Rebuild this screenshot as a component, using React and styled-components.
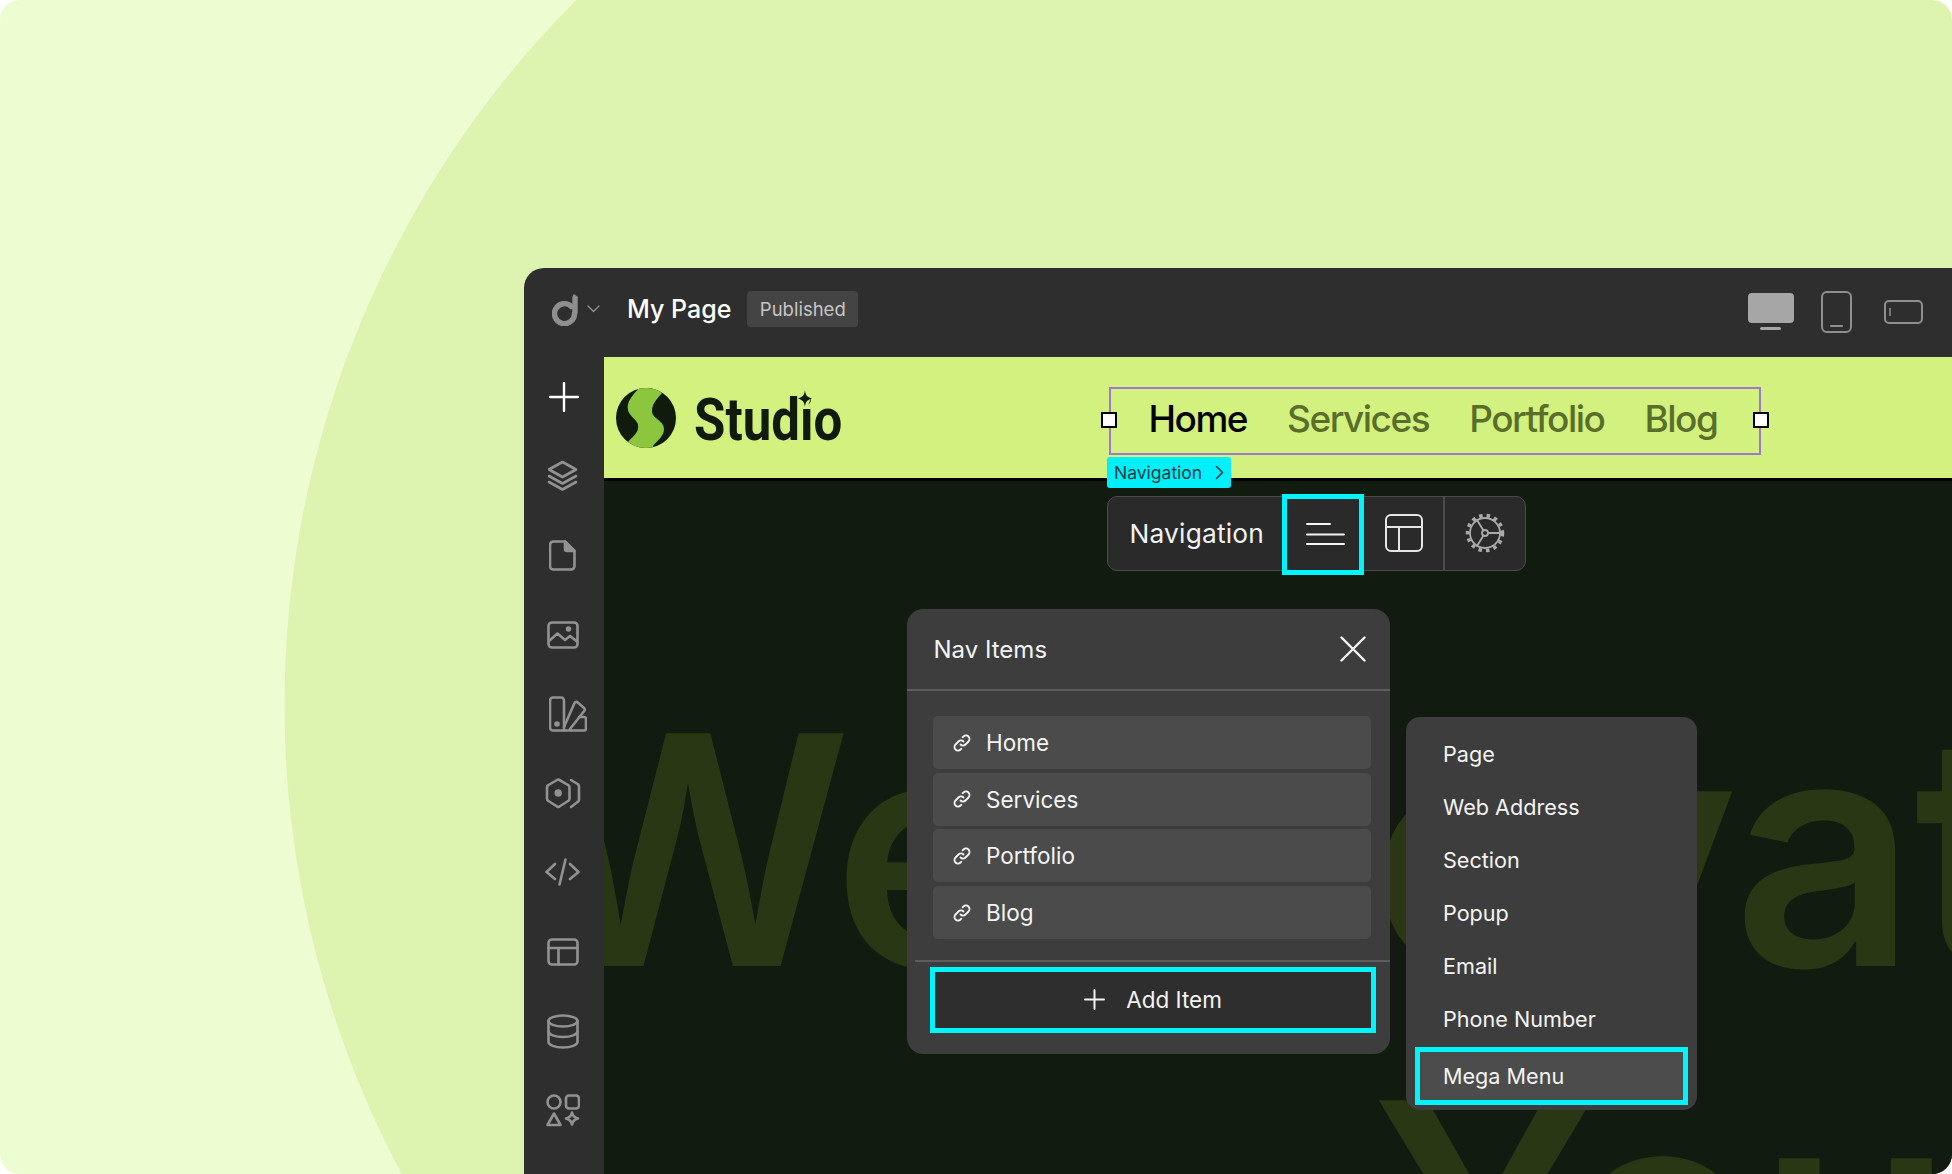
import styled, { createGlobalStyle } from "styled-components";

const GlobalStyle = createGlobalStyle`
	html, body {
		margin: 0;
		padding: 0;
		background: #fff;
	}
	* {
		box-sizing: border-box;
	}
`;

const CYAN = "#00f4fb";
const UI_FONT = `Inter, "Liberation Sans", sans-serif`;

const Page = styled.div`
	width: 1952px;
	height: 1174px;
	padding: 268px 0 0 524px;
	overflow: hidden;
	border-radius: 20px;
	font-family: ${UI_FONT};
	background: radial-gradient(circle 998px at 1282px 705px, #dcf4b0 99.9%, #ecfdd2 100%);
`;
const Window = styled.div`
	width: 1428px;
	height: 906px;
	display: grid;
	grid-template-columns: 80px 1fr;
	grid-template-rows: 89px 1fr;
	overflow: hidden;
	background: #2e2e2e;
	border-radius: 20px 0 0 0;
`;
const TopBar = styled.header`
	grid-column: 1 / 3;
	display: flex;
	align-items: center;
	padding: 0 29px 7px 28px;
	color: #fff;
`;
const Brand = styled.div`
	display: flex;
	align-items: center;
	gap: 9px;
	margin-right: 27px;
`;
const PageName = styled.div`
	font-size: 25px;
	font-weight: 500;
	margin-right: 16px;
`;
const Status = styled.div`
	height: 36px;
	padding: 0 12.5px;
	display: flex;
	align-items: center;
	font-size: 18.5px;
	color: #c6c6c6;
	background: #444;
	border-radius: 4px;
`;
const Devices = styled.div`
	margin-left: auto;
	margin-top: 5px;
	display: flex;
	align-items: center;
	gap: 27px;
`;
const Sidebar = styled.nav`
	display: grid;
	grid-auto-rows: 79.3px;
	justify-items: center;
	align-items: center;
	padding-right: 3px;
`;
const SideIcon = styled.svg`
	width: ${({ $w }) => $w}px;
	height: ${({ $h }) => $h}px;
	margin-left: ${({ $shift }) => $shift || 0}px;
	fill: none;
	stroke: #929292;
	stroke-width: 2.6;
	stroke-linecap: round;
	stroke-linejoin: round;
`;
const Preview = styled.main`
	position: relative;
	display: flex;
	flex-direction: column;
	overflow: hidden;
`;
const SiteNav = styled.div`
	height: 124px;
	flex: none;
	display: flex;
	align-items: flex-start;
	padding-left: 12px;
	background: #d3f17f;
	border-bottom: 3px solid #000;
`;
const SiteLogo = styled.div`
	width: 493px;
	height: 121px;
	display: flex;
	align-items: center;
	gap: 18px;
	flex: none;
`;
const SiteName = styled.div`
	position: relative;
	margin-top: 5px;
	font-family: Roboto, "Liberation Sans", sans-serif;
	font-size: 60px;
	font-weight: 700;
	line-height: 60px;
	color: #101a0d;
	transform: scaleX(0.85);
	transform-origin: left center;
`;
const SiteStar = styled.svg`
	position: absolute;
	left: 122px;
	top: 0;
	width: 17px;
	height: 17px;
`;
const Selection = styled.div`
	position: relative;
	width: 652px;
	height: 68px;
	margin-top: 29.5px;
	display: flex;
	align-items: center;
	gap: 40px;
	padding-left: 37.5px;
	padding-bottom: 4px;
	border: 2px solid #9f78d0;
`;
const NavLink = styled.span`
	font-size: 37px;
	font-weight: 500;
	letter-spacing: -1.5px;
	color: ${({ $active }) => ($active ? "#000" : "#5a6e2c")};
`;
const Handle = styled.span`
	position: absolute;
	top: 23.5px;
	${({ $side }) => $side}: -10px;
	width: 16px;
	height: 16px;
	background: #fff;
	border: 2px solid #000;
`;
const Canvas = styled.div`
	position: relative;
	flex: 1;
	overflow: hidden;
	background: #121b10;
`;
const Headline = styled.div`
	position: absolute;
	top: 185px;
	left: -79px;
	font-size: 320px;
	font-weight: 600;
	line-height: 367px;
	letter-spacing: -2.6px;
	white-space: nowrap;
	color: #2a3714;
`;
const HeadlineRow = styled.div`
	margin-left: ${({ $indent }) => $indent || 0}px;
`;
const Crumb = styled.div`
	position: absolute;
	top: 100px;
	left: 503px;
	width: 124px;
	height: 31px;
	display: flex;
	align-items: center;
	gap: 13px;
	padding-left: 7px;
	font-size: 17.5px;
	color: #0d3b44;
	background: #00f0fb;
	border-radius: 3px;
`;
const Toolbar = styled.div`
	position: absolute;
	top: 139px;
	left: 503px;
	width: 419px;
	height: 75px;
	display: flex;
	align-items: center;
	background: #2a2a2a;
	border: 1.5px solid #4c4c4c;
	border-radius: 10px;
`;
const ToolLabel = styled.div`
	width: 174px;
	padding-left: 21.5px;
	font-size: 26.3px;
	color: #f2f2f2;
	letter-spacing: 0.2px;
`;
const ToolButton = styled.div`
	position: relative;
	width: ${({ $w }) => $w}px;
	height: 100%;
	padding-bottom: 2px;
	display: flex;
	align-items: center;
	justify-content: center;
	flex: none;
	border-right: ${({ $divider }) => ($divider ? "2px solid #4c4c4c" : "none")};
`;
const ActiveTool = styled(ToolButton)`
	height: 81px;
	margin-top: 2px;
	padding: 0 0 2px 5px;
	border: 5px solid ${CYAN};
	background: #2a2a2a;
`;
const Panel = styled.section`
	position: absolute;
	top: 252px;
	left: 303px;
	width: 483px;
	height: 445px;
	background: #3d3d3d;
	border-radius: 16px;
	color: #f4f4f4;
`;
const PanelHead = styled.div`
	height: 82px;
	display: flex;
	align-items: center;
	justify-content: space-between;
	padding: 0 24px 0 26.5px;
	font-size: 24px;
	border-bottom: 2px solid #5c5c5c;
`;
const ItemList = styled.div`
	display: flex;
	flex-direction: column;
	gap: 3.7px;
	padding: 25px 19px 21px 18px;
	margin-left: 8px;
	border-bottom: 2px solid #5c5c5c;
`;
const NavItem = styled.div`
	height: 53px;
	display: flex;
	align-items: center;
	gap: 14px;
	padding-left: 19px;
	font-size: 22.5px;
	background: #4b4b4b;
	border-radius: 5px;
`;
const AddButton = styled.div`
	height: 66px;
	margin: 4.5px 14px 0 23px;
	display: flex;
	align-items: center;
	justify-content: center;
	gap: 21px;
	font-size: 22.5px;
	background: #2e2e2e;
	border: 5px solid ${CYAN};
`;
const Menu = styled.section`
	position: absolute;
	top: 360px;
	left: 802px;
	width: 291px;
	height: 393px;
	padding: 10px 9px 0;
	background: #3d3d3d;
	border-radius: 14px;
	color: #f4f4f4;
`;
const MenuRow = styled.div`
	height: 53px;
	display: flex;
	align-items: center;
	padding-left: 28px;
	font-size: 21.6px;
`;
const MenuPicked = styled(MenuRow)`
	height: 58px;
	margin-top: 2px;
	padding-left: 23px;
	background: #4c4c4c;
	border: 5px solid ${CYAN};
`;

const LineIcon = styled.svg`
	flex: none;
	fill: none;
	stroke: ${({ $stroke }) => $stroke || "#f4f4f4"};
	stroke-width: ${({ $weight }) => $weight || 2};
	stroke-linecap: round;
	stroke-linejoin: round;
`;
const AddGlyph = styled(LineIcon)`
	margin-left: 3px;
`;
const LandscapeGlyph = styled(LineIcon)`
	margin-left: 5px;
`;

const BrandMark = () => (
	<LineIcon width="26" height="33" viewBox="0 0 26 33" $stroke="#8f8f8f" $weight="5.4">
		<path d="M22.5 20.5a10 10 0 1 1-3-7" />
		<path d="M23 20.5V5c0-1 .4-1.700 1-2.500" strokeLinecap="butt" />
	</LineIcon>
);

const sideIcons = [
	<AddGlyph key="add" width="30" height="30" viewBox="0 0 30 30" $stroke="#fff" $weight="2.4">
		<path d="M15 1v28M1 15h28" />
	</AddGlyph>,
	<SideIcon key="layers" $w={31} $h={31} viewBox="0 0 31 31">
		<path d="M15.500 2 29 9.500 15.500 17 2 9.500Z" />
		<path d="M2 16l13.500 7.500L29 16" />
		<path d="M2 22l13.500 7.500L29 22" />
	</SideIcon>,
	<SideIcon key="page" $w={27} $h={31} viewBox="0 0 27 31">
		<path d="M4.500 1.500H16L25.500 11v15a3.500 3.500 0 0 1-3.500 3.500H4.500A3.500 3.500 0 0 1 1 26V5a3.500 3.500 0 0 1 3.500-3.500Z" />
		<path d="M16 1.500 25.500 11H18a2 2 0 0 1-2-2Z" fill="#929292" />
	</SideIcon>,
	<SideIcon key="image" $w={32} $h={28} viewBox="0 0 32 28">
		<rect x="1.500" y="1.500" width="29" height="25" rx="3.500" />
		<path d="M2 20l8.500-7.500 7.500 6.500 5-4 7 5.500" />
		<circle cx="21.500" cy="8" r="1.400" fill="#929292" />
	</SideIcon>,
	<SideIcon key="swatch" $w={38} $h={36} $shift={11} viewBox="0 0 38 36">
		<path d="M4 1.500h8a3 3 0 0 1 3 3V34.500H4a3 3 0 0 1-3-3v-27a3 3 0 0 1 3-3Z" />
		<circle cx="8" cy="28" r="1.500" fill="#929292" />
		<path d="M15 31 25.500 7a2 2 0 0 1 3-.7L35 12a2 2 0 0 1 .2 3L21 33" />
		<path d="M30 21h5a2 2 0 0 1 2 2v9.500a2 2 0 0 1-2 2H15" />
	</SideIcon>,
	<SideIcon key="cube" $w={36} $h={31} viewBox="0 0 36 31">
		<path d="M12 2a2.500 2.500 0 0 1 2.500 0L23 7a2.500 2.500 0 0 1 1.500 2.200v11.600a2.500 2.500 0 0 1-1.500 2.200l-8.500 5.500a2.500 2.500 0 0 1-2.500 0l-8.500-5.500A2.500 2.500 0 0 1 2 20.800V9.200A2.500 2.500 0 0 1 3.500 7Z" />
		<circle cx="13.200" cy="15" r="2.400" fill="#929292" />
		<path d="M26 2l6.500 4A2.500 2.500 0 0 1 34 8.200v13.600a2.500 2.500 0 0 1-1.500 2.200L26 29" />
	</SideIcon>,
	<SideIcon key="code" $w={35} $h={28} viewBox="0 0 35 28">
		<path d="M10 6 1.500 14l8.500 7M25 6l8.500 8-8.500 7M20.500 1.500 14.500 26.500" />
	</SideIcon>,
	<SideIcon key="layout" $w={32} $h={28} viewBox="0 0 32 28">
		<rect x="1.500" y="1.500" width="29" height="25" rx="3.500" />
		<path d="M1.500 10h29M11.500 10v16.500" />
	</SideIcon>,
	<SideIcon key="data" $w={32} $h={35} viewBox="0 0 32 35">
		<ellipse cx="16" cy="7" rx="14.500" ry="5.500" />
		<path d="M1.500 7v21c0 3 6.500 5.500 14.500 5.500s14.500-2.500 14.500-5.500V7" />
		<path d="M1.500 17.500c0 3 6.500 5.500 14.500 5.500s14.500-2.500 14.500-5.500" />
	</SideIcon>,
	<SideIcon key="shapes" $w={34} $h={33} viewBox="0 0 34 33">
		<circle cx="8" cy="8" r="6.500" />
		<rect x="20" y="1.500" width="13" height="13" rx="3" />
		<path d="M8 19.500 14.500 31h-13Z" />
		<path d="M26 18.500c.6 3.300 2.200 5 6 6-3.800 1-5.400 2.700-6 6-.6-3.300-2.200-5-6-6 3.800-1 5.400-2.700 6-6Z" />
	</SideIcon>,
];

const SiteMark = () => (
	<svg width="60" height="60" viewBox="0 0 60 60">
		<defs>
			<clipPath id="disc">
				<circle cx="30" cy="30" r="30" />
			</clipPath>
		</defs>
		<g clipPath="url(#disc)">
			<rect width="60" height="60" fill="#101a0d" />
			<path
				d="M23 0C17 7 10 14 12 22c2 8 12 10 10 19-1 5-7 9-10 13l2 6h24l-1-2c5-6 11-10 11-17 0-9-12-10-12-18 0-8 6-13 10-18l-6-5Z"
				fill="#8cc63f"
			/>
		</g>
	</svg>
);

const LinkGlyph = () => (
	<LineIcon width="20" height="20" viewBox="0 0 20 20" $weight="1.800">
		<path d="M8.500 11.500a3.500 3.500 0 0 0 5 0l3-3a3.500 3.500 0 0 0-5-5l-.900.900" />
		<path d="M11.500 8.500a3.500 3.500 0 0 0-5 0l-3 3a3.500 3.500 0 0 0 5 5l.900-.900" />
	</LineIcon>
);

const siteLinks = ["Home", "Services", "Portfolio", "Blog"];
const menuLinks = ["Page", "Web Address", "Section", "Popup", "Email", "Phone Number"];

const App = () => {
	return (
		<Page>
			<GlobalStyle />
			<Window>
				<TopBar>
					<Brand>
						<BrandMark />
						<LineIcon width="13" height="8" viewBox="0 0 13 8" $stroke="#8f8f8f" $weight="1.400">
							<path d="M1 1l5.500 5.500L12 1" />
						</LineIcon>
					</Brand>
					<PageName>My Page</PageName>
					<Status>Published</Status>
					<Devices>
						<svg width="46" height="37" viewBox="0 0 46 37" fill="#a6a6a6">
							<rect width="46" height="30" rx="4" />
							<rect x="12" y="34" width="21" height="3" rx="1.500" />
						</svg>
						<LineIcon width="31" height="42" viewBox="0 0 31 42" $stroke="#8f8f8f">
							<rect x="1" y="1" width="29" height="40" rx="5" />
							<path d="M10 35h11" />
						</LineIcon>
						<LandscapeGlyph width="39" height="24" viewBox="0 0 39 24" $stroke="#8f8f8f">
							<rect x="1" y="1" width="37" height="22" rx="4" />
							<path d="M6 8.500v7" strokeWidth="1.500" />
						</LandscapeGlyph>
					</Devices>
				</TopBar>
				<Sidebar>{sideIcons}</Sidebar>
				<Preview>
					<SiteNav>
						<SiteLogo>
							<SiteMark />
							<SiteName>
								Studio
								<SiteStar viewBox="0 0 17 17">
									<circle cx="7.500" cy="9.500" r="7" fill="#d3f17f" />
									<path
										d="M8.500 0c.6 5 2.400 7.200 8.500 8.500-6.100 1.300-7.900 3.500-8.500 8.500-.6-5-2.400-7.200-8.500-8.500C6.100 7.200 7.900 5 8.500 0Z"
										fill="#101a0d"
									/>
								</SiteStar>
							</SiteName>
						</SiteLogo>
						<Selection>
							<Handle $side="left" />
							{siteLinks.map((link, i) => (
								<NavLink key={link} $active={i === 0}>
									{link}
								</NavLink>
							))}
							<Handle $side="right" />
						</Selection>
					</SiteNav>
					<Canvas>
						<Headline>
							<HeadlineRow>We Elevate</HeadlineRow>
							<HeadlineRow $indent={846}>You</HeadlineRow>
						</Headline>
					</Canvas>
					<Crumb>
						Navigation
						<LineIcon width="9" height="15" viewBox="0 0 9 15" $stroke="#0d3b44" $weight="1.600">
							<path d="M1.500 1.500l6 6-6 6" />
						</LineIcon>
					</Crumb>
					<Toolbar>
						<ToolLabel>Navigation</ToolLabel>
						<ActiveTool $w={82}>
							<LineIcon width="39" height="24" viewBox="0 0 39 24" $stroke="#f4f4f4" $weight="2">
								<path d="M1 2h23M1 12.500h37M1 22h37" />
							</LineIcon>
						</ActiveTool>
						<ToolButton $w={81} $divider>
							<LineIcon width="38" height="38" viewBox="0 0 38 38" $stroke="#e6e6e6">
								<rect x="1" y="1" width="36" height="36" rx="5" />
								<path d="M1 13h36M14 13v24" />
							</LineIcon>
						</ToolButton>
						<ToolButton $w={80}>
							<LineIcon width="40" height="40" viewBox="0 0 40 40" $stroke="#ababab" $weight="1.800">
								<circle cx="20" cy="20" r="15" />
								<circle cx="20" cy="20" r="17.500" strokeWidth="3.500" strokeDasharray="3.500 4.100" strokeLinecap="butt" />
								<circle cx="20" cy="20" r="3" />
								<path d="M23 20h12M18.500 17.500 12 7M18.500 22.500 12 33" />
							</LineIcon>
						</ToolButton>
					</Toolbar>
					<Panel>
						<PanelHead>
							Nav Items
							<LineIcon width="26" height="26" viewBox="0 0 26 26" $weight="2.400">
								<path d="M1.500 1.500l23 23M24.500 1.500l-23 23" />
							</LineIcon>
						</PanelHead>
						<ItemList>
							{siteLinks.map((link) => (
								<NavItem key={link}>
									<LinkGlyph />
									{link}
								</NavItem>
							))}
						</ItemList>
						<AddButton>
							<LineIcon width="21" height="21" viewBox="0 0 21 21" $weight="2">
								<path d="M10.500 1v19M1 10.500h19" />
							</LineIcon>
							Add Item
						</AddButton>
					</Panel>
					<Menu>
						{menuLinks.map((link) => (
							<MenuRow key={link}>{link}</MenuRow>
						))}
						<MenuPicked>Mega Menu</MenuPicked>
					</Menu>
				</Preview>
			</Window>
		</Page>
	);
};

export default App;
